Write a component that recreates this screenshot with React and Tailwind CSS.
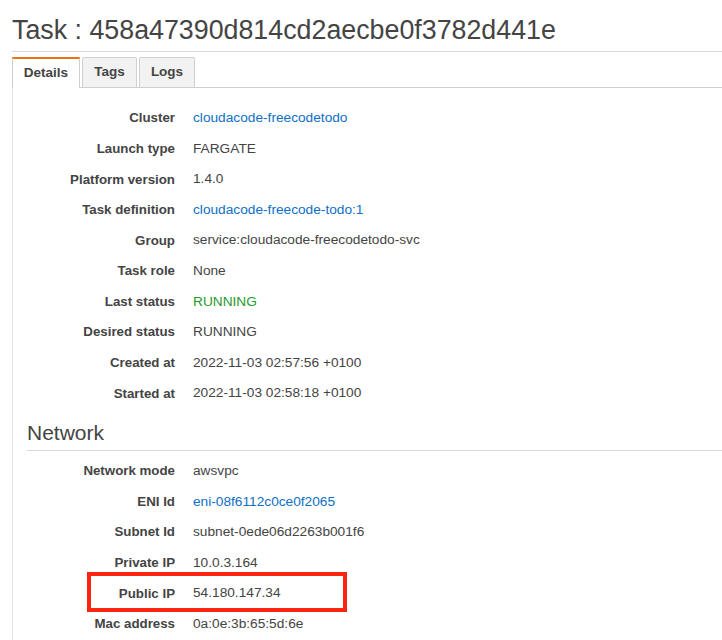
import React from "react";

const details = [
  ["Cluster", "cloudacode-freecodetodo", "link"],
  ["Launch type", "FARGATE"],
  ["Platform version", "1.4.0"],
  ["Task definition", "cloudacode-freecode-todo:1", "link"],
  ["Group", "service:cloudacode-freecodetodo-svc"],
  ["Task role", "None"],
  ["Last status", "RUNNING", "green"],
  ["Desired status", "RUNNING"],
  ["Created at", "2022-11-03 02:57:56 +0100"],
  ["Started at", "2022-11-03 02:58:18 +0100"],
];

const network = [
  ["Network mode", "awsvpc"],
  ["ENI Id", "eni-08f6112c0ce0f2065", "link"],
  ["Subnet Id", "subnet-0ede06d2263b001f6"],
  ["Private IP", "10.0.3.164"],
  ["Public IP", "54.180.147.34", null, true],
  ["Mac address", "0a:0e:3b:65:5d:6e"],
];

function Row({ label, value, kind, boxed }) {
  const valueClass =
    kind === "link"
      ? "text-[#0f6fc6]"
      : kind === "green"
      ? "text-[#1d9a2c]"
      : "text-[#444]";
  return (
    <div className="relative flex h-[30.6px] items-center">
      <div className="w-[162px] shrink-0 text-right text-[13.3px] font-bold text-[#444]">
        {label}
      </div>
      <div className={`ml-[18px] whitespace-nowrap text-[13.7px] ${valueClass}`}>
        {value}
      </div>
      {boxed && (
        <div className="pointer-events-none absolute left-[74px] top-[-6px] h-[40px] w-[260px] border-[4px] border-[#fb2410]" />
      )}
    </div>
  );
}

export default function App() {
  return (
    <div
      className="h-[640px] w-[722px] overflow-hidden bg-white text-[#444]"
      style={{ fontFamily: '"Liberation Sans", Arial, Helvetica, sans-serif' }}
    >
      <div className="pl-3 pt-[15px]">
        <h1 className="whitespace-nowrap text-[26.8px] font-normal leading-[30px] text-[#444]">
          Task : 458a47390d814cd2aecbe0f3782d441e
        </h1>
        <div className="mt-[6px] border-t border-[#d9d9d9]" />
        <div className="mt-[5px] flex items-end gap-[2px] border-b border-[#cfcfcf]">
          <div className="-mb-px flex h-[31px] w-[68px] items-center justify-center border-x border-t-2 border-x-[#cfcfcf] border-t-[#ec7211] bg-white text-[13.5px] font-bold text-[#444]">
            Details
          </div>
          <div className="flex h-[30px] w-[55px] items-center justify-center rounded-t-[2px] border-x border-t border-[#cfcfcf] bg-[#f2f2f2] text-[13.5px] font-bold text-[#444]">
            Tags
          </div>
          <div className="flex h-[30px] w-[56px] items-center justify-center rounded-t-[2px] border-x border-t border-[#cfcfcf] bg-[#f2f2f2] text-[13.5px] font-bold text-[#444]">
            Logs
          </div>
        </div>
        <div className="border-l border-[#e3e3e3] pb-10 pt-[15px]">
          {details.map(([l, v, k]) => (
            <Row key={l} label={l} value={v} kind={k} />
          ))}
          <div className="ml-[14px] mt-[12px] border-b border-[#d9d9d9] pb-[5px]">
            <h2 className="text-[21px] font-normal leading-[24px] text-[#444]">Network</h2>
          </div>
          <div className="pt-[5px]">
            {network.map(([l, v, k, b]) => (
              <Row key={l} label={l} value={v} kind={k} boxed={b} />
            ))}
          </div>
        </div>
      </div>
    </div>
  );
}
